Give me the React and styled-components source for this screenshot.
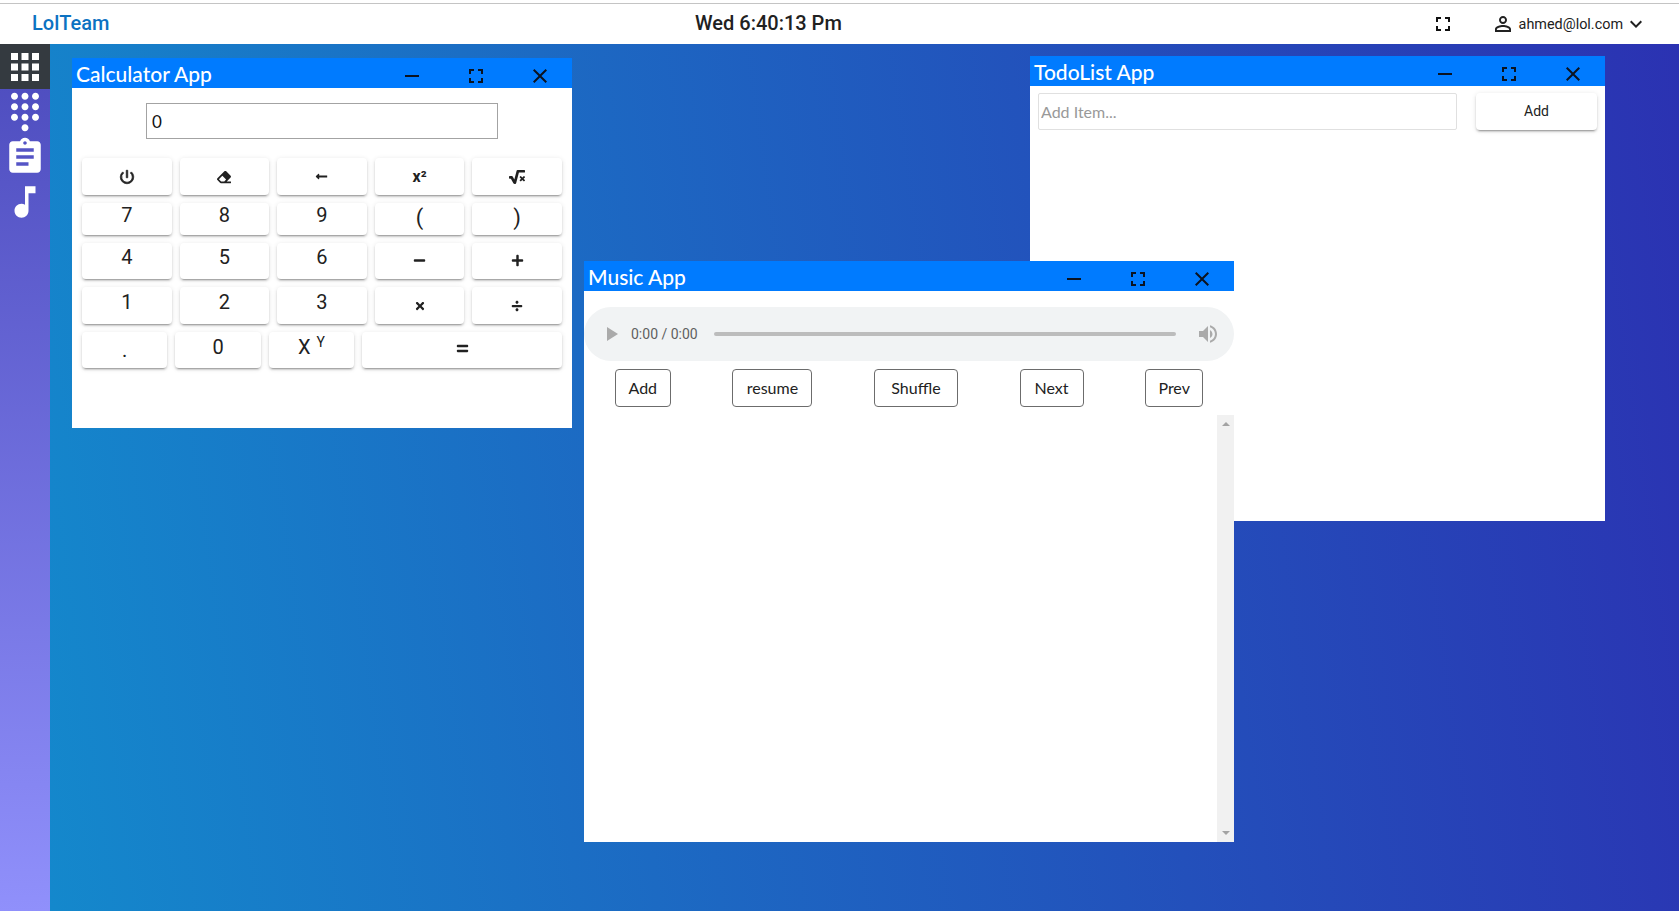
import React from 'react'
import styled, { createGlobalStyle } from 'styled-components'
import {
  MdApps, MdDialpad, MdAssignment, MdMusicNote, MdFullscreen, MdRemove, MdClose,
  MdPersonOutline, MdKeyboardArrowDown, MdPowerSettingsNew, MdPlayArrow, MdVolumeUp,
} from 'react-icons/md'
import {
  FaEraser, FaLongArrowAltLeft, FaSquareRootAlt, FaMinus, FaPlus, FaTimes, FaDivide, FaEquals,
} from 'react-icons/fa'

const handFont = `"Lato", "Open Sans", sans-serif`

const GlobalStyle = createGlobalStyle`
  * { box-sizing: border-box; }
  html, body { margin: 0; height: 100%; overflow: hidden; }
  body { font-family: Roboto, "Liberation Sans", sans-serif; background: #fff; }
`

const Page = styled.div`
  height: 911px;
  padding-top: 3px;
  display: flex;
  flex-direction: column;
  background: #fff;
`

const Header = styled.header`
  height: 41px;
  flex: none;
  border-top: 1px solid #c4c4c4;
  display: grid;
  grid-template-columns: 663px 1fr auto;
  align-items: center;
  padding-left: 32px;
  padding-right: 31px;
`

const Brand = styled.div`
  font-size: 20px;
  font-weight: 500;
  color: #0c72c2;
  margin-top: -2px;
`

const Clock = styled.div`
  font-size: 20px;
  font-weight: 500;
  color: #212121;
  margin-top: -2px;
`

const UserArea = styled.div`
  display: flex;
  align-items: center;
  font-size: 14.4px;
  color: #212121;
  svg { flex: none; }
`

const UserName = styled.span`
  margin-right: 1px;
  margin-left: 4px;
`

const HeaderExpand = styled(MdFullscreen)`
  margin-right: 36px;
  color: #111;
`

const Body = styled.div`
  flex: 1;
  display: flex;
  min-height: 0;
`

const Sidebar = styled.nav`
  width: 50px;
  flex: none;
  background: linear-gradient(180deg, #4c4bbd 0%, #9090fb 100%);
`

const SideItem = styled.div`
  height: 45px;
  display: flex;
  align-items: center;
  justify-content: center;
  color: #fff;
  background: ${({ $active }) => ($active ? '#343a40' : 'transparent')};
`

const Desktop = styled.main`
  flex: 1;
  position: relative;
  overflow: hidden;
  background: linear-gradient(82deg, #1488cc 0%, #2b32b2 100%);
`

const Window = styled.section`
  position: absolute;
  left: ${({ $x }) => $x}px;
  top: ${({ $y }) => $y}px;
  width: ${({ $w }) => $w}px;
  height: ${({ $h }) => $h}px;
  background: #fff;
  display: flex;
  flex-direction: column;
`

const TitleBar = styled.div`
  height: 30px;
  flex: none;
  background: #007bff;
  display: flex;
  align-items: center;
  justify-content: space-between;
  padding-left: 4px;
`

const TitleText = styled.div`
  font-family: ${handFont};
  font-size: 21px;
  font-weight: 500;
  color: #fff;
`

const TitleControls = styled.div`
  display: flex;
  padding-top: 5px;
`

const ControlButton = styled.div`
  width: 64px;
  display: flex;
  justify-content: center;
  color: #0b1320;
`

const CalcDisplay = styled.input`
  display: block;
  width: 352px;
  height: 36px;
  margin: 15px auto 19px;
  padding: 0 5px;
  border: 1px solid #a3a3a3;
  outline: none;
  font-family: ${handFont};
  font-size: 17px;
  color: #111;
`

const Keypad = styled.div`
  display: flex;
  flex-direction: column;
  gap: 8px;
  padding: 0 10px;
`

const KeyRow = styled.div`
  display: flex;
  gap: 8px;
  height: ${({ $h }) => $h}px;
`

const RaisedButton = styled.div`
  display: flex;
  align-items: center;
  justify-content: center;
  background: #fff;
  border-radius: 4px;
  color: #212121;
  box-shadow: 0 3px 1px -2px rgba(0,0,0,.2), 0 2px 2px 0 rgba(0,0,0,.14), 0 1px 5px 0 rgba(0,0,0,.12);
`

const Key = styled(RaisedButton)`
  flex: ${({ $grow }) => $grow || 1} 1 0;
  font-size: 20px;
  padding-bottom: ${({ $lift }) => $lift || 0}px;
`

const ParenText = styled.span`
  font-size: 22px;
`

const BoldPower = styled(MdPowerSettingsNew)`
  stroke: currentColor;
  stroke-width: 1;
  path[fill='none'] { stroke: none; }
`

const SquareText = styled.span`
  font-size: 16px;
  font-weight: 700;
`

const Sup = styled.sup`
  font-size: 14px;
  margin-left: 6px;
  line-height: 0;
  position: relative;
  top: -5px;
`

const TodoForm = styled.div`
  display: flex;
  gap: 19px;
  padding: 7px 8px;
`

const TodoInput = styled.input`
  flex: 1;
  min-width: 0;
  height: 37px;
  border: 1px solid #e0e0e0;
  border-radius: 2px;
  padding: 0 2px;
  outline: none;
  font-family: ${handFont};
  font-size: 16px;
  &::placeholder { color: #999; }
`

const TodoAdd = styled(RaisedButton)`
  width: 121px;
  height: 37px;
  font-size: 14px;
  padding-bottom: 2px;
`

const AudioBar = styled.div`
  height: 54px;
  margin-top: 16px;
  flex: none;
  border-radius: 27px;
  background: #f1f3f4;
  display: flex;
  align-items: center;
  padding: 0 14px 0 15px;
  color: #aaa;
  svg { flex: none; }
`

const AudioTime = styled.span`
  font-size: 14px;
  color: #5f5f5f;
  margin-left: 8px;
  white-space: nowrap;
`

const AudioTrack = styled.div`
  flex: 1;
  height: 4px;
  margin: 0 20px 0 16px;
  border-radius: 2px;
  background: #bcbcbc;
`

const MusicActions = styled.div`
  display: flex;
  justify-content: space-around;
  margin-top: 8px;
  flex: none;
`

const OutlineButton = styled.div`
  height: 38px;
  width: ${({ $w }) => $w}px;
  display: flex;
  align-items: center;
  justify-content: center;
  border: 1px solid #6c6c6c;
  border-radius: 4px;
  font-family: ${handFont};
  font-size: 16px;
  color: #222;
  padding-bottom: 2px;
`

const TrackList = styled.div`
  flex: 1;
  margin-top: 8px;
  display: flex;
  justify-content: flex-end;
  min-height: 0;
`

const ScrollTrack = styled.div`
  width: 17px;
  background: #f1f1f1;
  display: flex;
  flex-direction: column;
  justify-content: space-between;
  align-items: center;
  padding: 7px 0;
`

const ScrollArrow = styled.div`
  width: 0;
  height: 0;
  border-left: 4px solid transparent;
  border-right: 4px solid transparent;
  ${({ $down }) => ($down ? 'border-top: 4px solid #a3a3a3;' : 'border-bottom: 4px solid #a3a3a3;')}
`

const AppWindow = ({ title, x, y, w, h, children }) => (
  <Window $x={x} $y={y} $w={w} $h={h}>
    <TitleBar>
      <TitleText>{title}</TitleText>
      <TitleControls>
        <ControlButton><MdRemove size={24} /></ControlButton>
        <ControlButton><MdFullscreen size={24} /></ControlButton>
        <ControlButton><MdClose size={24} /></ControlButton>
      </TitleControls>
    </TitleBar>
    {children}
  </Window>
)

const Calculator = () => (
  <AppWindow title="Calculator App" x={22} y={14} w={500} h={370}>
    <CalcDisplay readOnly value="0" />
    <Keypad>
      <KeyRow $h={37}>
        <Key><BoldPower size={18} /></Key>
        <Key><FaEraser size={14} /></Key>
        <Key><FaLongArrowAltLeft size={13} /></Key>
        <Key><SquareText>x²</SquareText></Key>
        <Key><FaSquareRootAlt size={16} /></Key>
      </KeyRow>
      <KeyRow $h={32}>
        <Key $lift={8}>7</Key>
        <Key $lift={8}>8</Key>
        <Key $lift={8}>9</Key>
        <Key $lift={4}><ParenText>(</ParenText></Key>
        <Key $lift={4}><ParenText>)</ParenText></Key>
      </KeyRow>
      <KeyRow $h={36}>
        <Key $lift={8}>4</Key>
        <Key $lift={8}>5</Key>
        <Key $lift={8}>6</Key>
        <Key $lift={1}><FaMinus size={13} /></Key>
        <Key $lift={1}><FaPlus size={13} /></Key>
      </KeyRow>
      <KeyRow $h={37}>
        <Key $lift={8}>1</Key>
        <Key $lift={8}>2</Key>
        <Key $lift={8}>3</Key>
        <Key><FaTimes size={12} /></Key>
        <Key><FaDivide size={12} /></Key>
      </KeyRow>
      <KeyRow $h={36}>
        <Key>.</Key>
        <Key $lift={6}>0</Key>
        <Key $lift={6}>X<Sup>Y</Sup></Key>
        <Key $grow={2.34} $lift={3}><FaEquals size={13} /></Key>
      </KeyRow>
    </Keypad>
  </AppWindow>
)

const TodoList = () => (
  <AppWindow title="TodoList App" x={980} y={12} w={575} h={465}>
    <TodoForm>
      <TodoInput placeholder="Add Item..." />
      <TodoAdd>Add</TodoAdd>
    </TodoForm>
  </AppWindow>
)

const MusicPlayer = () => (
  <AppWindow title="Music App" x={534} y={217} w={650} h={581}>
    <AudioBar>
      <MdPlayArrow size={24} />
      <AudioTime>0:00 / 0:00</AudioTime>
      <AudioTrack />
      <MdVolumeUp size={24} />
    </AudioBar>
    <MusicActions>
      <OutlineButton $w={56}>Add</OutlineButton>
      <OutlineButton $w={80}>resume</OutlineButton>
      <OutlineButton $w={84}>Shuffle</OutlineButton>
      <OutlineButton $w={64}>Next</OutlineButton>
      <OutlineButton $w={58}>Prev</OutlineButton>
    </MusicActions>
    <TrackList>
      <ScrollTrack>
        <ScrollArrow />
        <ScrollArrow $down />
      </ScrollTrack>
    </TrackList>
  </AppWindow>
)

const App = () => (
  <Page>
    <GlobalStyle />
    <Header>
      <Brand>LolTeam</Brand>
      <Clock>Wed 6:40:13 Pm</Clock>
      <UserArea>
        <HeaderExpand size={24} />
        <MdPersonOutline size={24} />
        <UserName>ahmed@lol.com</UserName>
        <MdKeyboardArrowDown size={24} />
      </UserArea>
    </Header>
    <Body>
      <Sidebar>
        <SideItem $active><MdApps size={42} /></SideItem>
        <SideItem><MdDialpad size={42} /></SideItem>
        <SideItem><MdAssignment size={42} /></SideItem>
        <SideItem><MdMusicNote size={42} /></SideItem>
      </Sidebar>
      <Desktop>
        <TodoList />
        <Calculator />
        <MusicPlayer />
      </Desktop>
    </Body>
  </Page>
)

export default App
